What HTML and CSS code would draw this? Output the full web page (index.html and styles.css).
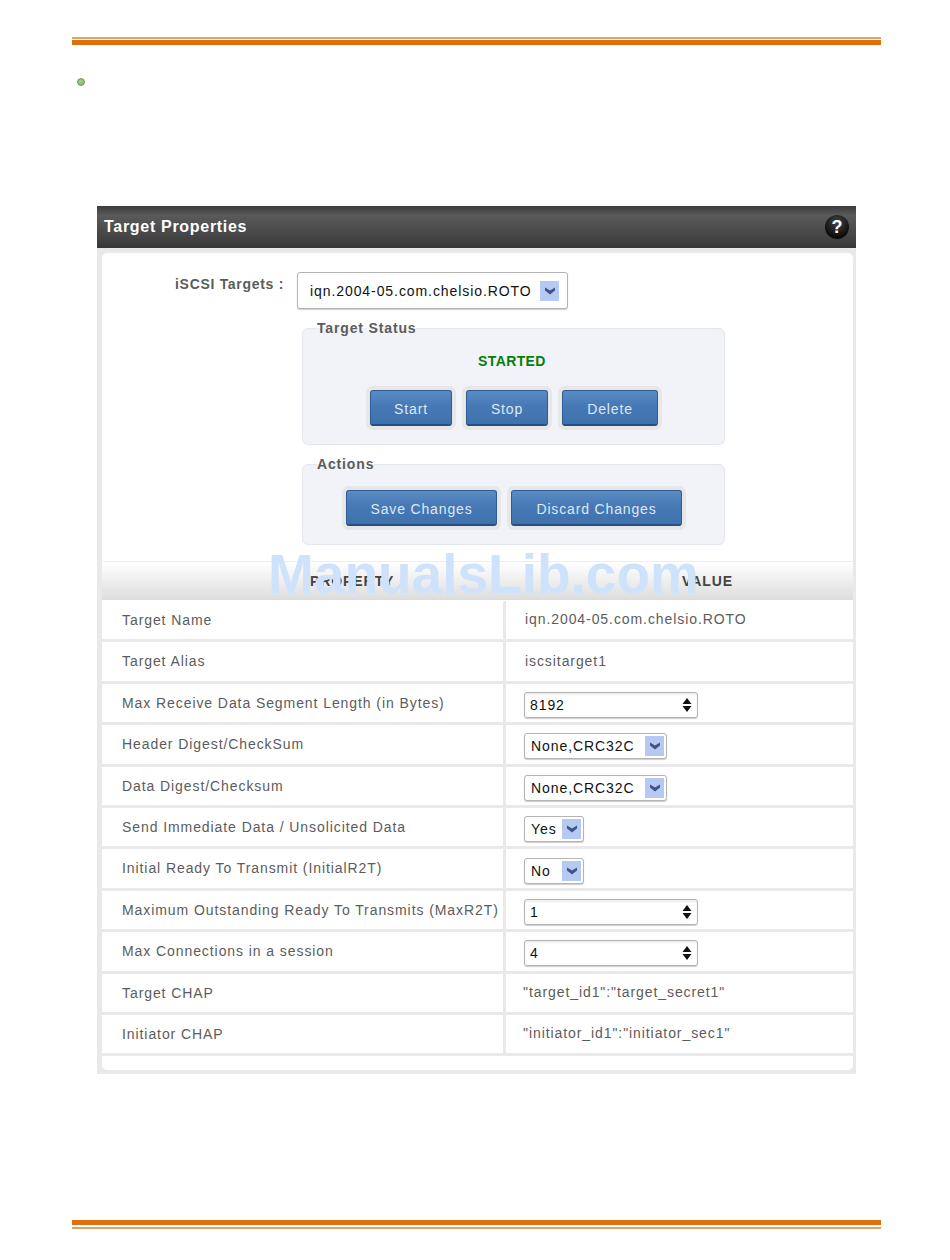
FILE: index.html
```html
<!DOCTYPE html>
<html>
<head>
    <title>Target Properties</title>
    <link rel="stylesheet" href="styles.css">
</head>
<body>
    <div class="page">
        <div class="rule rule-top"></div>
        <div class="bullet"></div>

        <div class="panel">
            <div class="panel-header">
                <h1>Target Properties</h1>
                <span class="help">?</span>
            </div>
            <div class="panel-body">
                <div class="target-row">
                    <label>iSCSI Targets :</label>
                    <div class="select select-large">
                        <span>iqn.2004-05.com.chelsio.ROTO</span>
                        <i class="drop"><svg width="12" height="8" viewBox="0 0 12 8"><path d="M1 0.5L6 3.5L11 0.5V3.5L6 7.5L1 3.5Z" fill="#3c5488"/></svg></i>
                    </div>
                </div>

                <fieldset class="group">
                    <legend>Target Status</legend>
                    <div class="status">STARTED</div>
                    <div class="buttons buttons-status">
                        <button class="btn btn-start">Start</button>
                        <button class="btn btn-stop">Stop</button>
                        <button class="btn btn-delete">Delete</button>
                    </div>
                </fieldset>

                <fieldset class="group group-actions">
                    <legend>Actions</legend>
                    <div class="buttons buttons-actions">
                        <button class="btn btn-save">Save Changes</button>
                        <button class="btn btn-discard">Discard Changes</button>
                    </div>
                </fieldset>

                <div class="table-head">
                    <div class="head-prop">PROPERTY</div>
                    <div class="head-value">VALUE</div>
                </div>

                <div class="row"><div class="key">Target Name</div><div class="val">iqn.2004-05.com.chelsio.ROTO</div></div>
                <div class="row"><div class="key">Target Alias</div><div class="val">iscsitarget1</div></div>
                <div class="row"><div class="key">Max Receive Data Segment Length (in Bytes)</div><div class="val val-form">
                    <div class="spin"><span>8192</span><svg width="12" height="16" viewBox="0 0 12 16"><path d="M6 1L10.5 7H1.5ZM1.5 9H10.5L6 15Z" fill="#111"/></svg></div>
                </div></div>
                <div class="row"><div class="key">Header Digest/CheckSum</div><div class="val val-form">
                    <div class="select select-wide"><span>None,CRC32C</span><i class="drop"><svg width="12" height="8" viewBox="0 0 12 8"><path d="M1 0.5L6 3.5L11 0.5V3.5L6 7.5L1 3.5Z" fill="#3c5488"/></svg></i></div>
                </div></div>
                <div class="row"><div class="key">Data Digest/Checksum</div><div class="val val-form">
                    <div class="select select-wide"><span>None,CRC32C</span><i class="drop"><svg width="12" height="8" viewBox="0 0 12 8"><path d="M1 0.5L6 3.5L11 0.5V3.5L6 7.5L1 3.5Z" fill="#3c5488"/></svg></i></div>
                </div></div>
                <div class="row"><div class="key">Send Immediate Data / Unsolicited Data</div><div class="val val-form">
                    <div class="select select-small"><span>Yes</span><i class="drop"><svg width="12" height="8" viewBox="0 0 12 8"><path d="M1 0.5L6 3.5L11 0.5V3.5L6 7.5L1 3.5Z" fill="#3c5488"/></svg></i></div>
                </div></div>
                <div class="row"><div class="key">Initial Ready To Transmit (InitialR2T)</div><div class="val val-form">
                    <div class="select select-small"><span>No</span><i class="drop"><svg width="12" height="8" viewBox="0 0 12 8"><path d="M1 0.5L6 3.5L11 0.5V3.5L6 7.5L1 3.5Z" fill="#3c5488"/></svg></i></div>
                </div></div>
                <div class="row"><div class="key">Maximum Outstanding Ready To Transmits (MaxR2T)</div><div class="val val-form">
                    <div class="spin"><span>1</span><svg width="12" height="16" viewBox="0 0 12 16"><path d="M6 1L10.5 7H1.5ZM1.5 9H10.5L6 15Z" fill="#111"/></svg></div>
                </div></div>
                <div class="row"><div class="key">Max Connections in a session</div><div class="val val-form">
                    <div class="spin"><span>4</span><svg width="12" height="16" viewBox="0 0 12 16"><path d="M6 1L10.5 7H1.5ZM1.5 9H10.5L6 15Z" fill="#111"/></svg></div>
                </div></div>
                <div class="row"><div class="key">Target CHAP</div><div class="val val-chap">"target_id1":"target_secret1"</div></div>
                <div class="row"><div class="key">Initiator CHAP</div><div class="val val-chap">"initiator_id1":"initiator_sec1"</div></div>
            </div>
        </div>

        <div class="rule rule-bottom"></div>
        <div class="watermark">ManualsLib.com</div>
    </div>
</body>
</html>
```
FILE: styles.css
```css
* {
    box-sizing: border-box;
}
body {
    margin: 0;
    background-color: #fff;
    font-family: "Liberation Sans", Arial, sans-serif;
    font-size: 14px;
    color: #5c5c5c;
    letter-spacing: 0.92px;
}
.page {
    position: relative;
    width: 950px;
    height: 1260px;
    padding: 37px 69px 0 72px;
}
.rule {
    height: 8px;
    border-top: 2px solid #dda468;
    background-color: #e0700f;
}
.rule-top {
    background-clip: padding-box;
    border-bottom: 0;
    height: 8px;
    box-shadow: inset 0 1px 0 #fff;
}
.rule-bottom {
    height: 9px;
    margin-top: 146px;
    border-top: 0;
    border-bottom: 2px solid #d8a56c;
    background-clip: padding-box;
    box-shadow: inset 0 -2px 0 #fff;
}
.bullet {
    width: 8px;
    height: 8px;
    margin: 33px 0 0 5px;
    border-radius: 50%;
    background: radial-gradient(circle at 45% 40%, #a8cf8a, #7fae62);
    border: 1px solid #6f9a58;
}
.panel {
    width: 759px;
    margin: 120px 0 0 25px;
    background-color: #e9e9e9;
    padding-bottom: 4px;
}
.panel-header {
    height: 42px;
    padding: 0 7px;
    display: flex;
    align-items: center;
    justify-content: space-between;
    background: linear-gradient(#3c3c3c 0%, #5a5a5a 22%, #3d3d3d 90%, #353535 100%);
}
.panel-header h1 {
    margin: 0;
    font-size: 16px;
    font-weight: bold;
    color: #fff;
    letter-spacing: 0.7px;
}
.help {
    width: 24px;
    height: 24px;
    border-radius: 50%;
    background: radial-gradient(circle at 50% 30%, #444, #0c0c0c 70%);
    color: #fff;
    font-size: 18px;
    font-weight: bold;
    line-height: 24px;
    text-align: center;
    letter-spacing: 0;
}
.panel-body {
    width: 751px;
    height: 817px;
    margin: 5px 0 0 5px;
    padding-top: 19px;
    background-color: #fff;
    border-radius: 5px;
    overflow: hidden;
}
.target-row {
    display: flex;
    gap: 14px;
    padding-left: 73px;
}
.target-row label {
    width: 108px;
    margin-top: 2px;
    font-weight: bold;
    line-height: 20px;
    letter-spacing: 0.7px;
    white-space: nowrap;
}
.select {
    display: flex;
    align-items: center;
    justify-content: space-between;
    height: 26px;
    padding: 0 2px 0 6px;
    background-color: #fff;
    border: 1px solid #b4b4b4;
    border-radius: 3px;
    box-shadow: 0 1px 1px #ccc;
    color: #111;
}
.select-large {
    width: 271px;
    height: 37px;
    padding: 0 8px 0 12px;
}
.select-wide {
    width: 143px;
}
.select-small {
    width: 60px;
}
.drop {
    display: flex;
    align-items: center;
    justify-content: center;
    width: 19px;
    height: 20px;
    background-color: #b5c9f2;
}
.group {
    width: 423px;
    margin: 11px 0 0 200px;
    padding: 0 0 0 14px;
    background-color: #f1f3f8;
    border: 1px solid #e4e7ee;
    border-radius: 6px;
}
.group legend {
    padding: 0;
    font-weight: bold;
    line-height: 16px;
    letter-spacing: 0.85px;
}
.group-actions {
    margin-top: 11px;
}
.status {
    margin: 17px 0 0 161px;
    font-weight: bold;
    line-height: 16px;
    color: #0a7d0a;
    letter-spacing: 0.4px;
}
.buttons {
    display: flex;
    gap: 14px;
}
.buttons-status {
    margin: 21px 0 18px 53px;
}
.buttons-actions {
    margin: 18px 0 18px 29px;
}
.btn {
    height: 36px;
    padding: 2px 0 0;
    font-family: inherit;
    font-size: 14px;
    letter-spacing: 0.85px;
    color: #dfe8f3;
    background: linear-gradient(#5a8bc4, #4679b5 45%, #3f72ad);
    border: 1px solid #2f5c93;
    border-bottom: 2px solid #274e80;
    border-radius: 3px;
    box-shadow: 0 0 0 4px #e7e7e7;
}
.btn-start, .btn-stop {
    width: 82px;
}
.btn-delete {
    width: 96px;
}
.btn-save {
    width: 151px;
}
.btn-discard {
    width: 171px;
}
.table-head {
    display: grid;
    grid-template-columns: 401px 1fr;
    height: 39px;
    margin: 16px 0 1px;
    font-weight: bold;
    line-height: 39px;
    background: linear-gradient(#fff, #dedede);
    border-top: 1px solid #eee;
    border-bottom: 1px solid #ddd;
    color: #444;
}
.head-prop {
    padding-left: 208px;
}
.head-value {
    padding-left: 179px;
}
.row {
    display: grid;
    grid-template-columns: 401px 1fr;
    height: 41.4px;
    border-bottom: 3px solid #e9e9e9;
}
.key {
    padding: 9px 0 0 20px;
    line-height: 20px;
    white-space: nowrap;
}
.val {
    display: flex;
    align-items: center;
    padding: 0 0 2px 19px;
    border-left: 3px solid #e9e9e9;
    white-space: nowrap;
}
.val-form {
    padding: 4px 0 0 18px;
}
.val-chap {
    padding-left: 17px;
}
.spin {
    display: flex;
    align-items: center;
    justify-content: space-between;
    width: 174px;
    height: 26px;
    padding: 0 4px 0 5px;
    border: 1px solid #b4b4b4;
    border-radius: 3px;
    box-shadow: inset 0 2px 2px #eee, 0 1px 1px #ccc;
    color: #111;
}
.watermark {
    position: absolute;
    left: 268px;
    top: 543px;
    font-size: 55px;
    font-weight: bold;
    line-height: 63px;
    letter-spacing: 0;
    color: #cfe2fb;
    white-space: nowrap;
}
```
